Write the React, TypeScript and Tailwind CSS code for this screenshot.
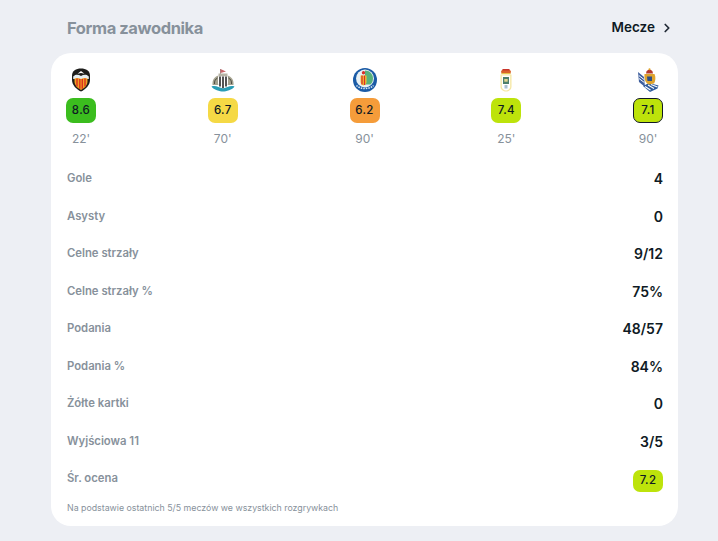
import React from 'react';
import { ChevronRight } from 'lucide-react';

function Valencia() {
  return (
    <svg width="24" height="24" viewBox="0 0 24 24">
      <path d="M3 7.500C3 3 7 0.500 12 0.500S21 3 21 7.500V12C21 17 16.500 21.500 12 23.500C7.500 21.500 3 17 3 12Z" fill="#1d1d1b" />
      <path d="M4.200 8.500C7 6 9.500 6.800 12 8C14.500 6.800 17 6 19.800 8.500V11H4.200Z" fill="#e4edf0" />
      <path d="M5.500 10.500C8 9.500 10 10 12 11C14 10 16 9.500 18.500 10.500V13.500C18.500 17.500 15 20.500 12 22C9 20.500 5.500 17.500 5.500 13.500Z" fill="#f2a024" />
      <path d="M8 10.500V18.500M10.800 11V20.800M13.300 11V20.800M16 10.500V18.500" stroke="#d9301f" strokeWidth="1.400" />
      <path d="M12 3L8.500 5.800L12 5L15.500 5.800Z" fill="#ffffff" />
    </svg>
  );
}

function Newcastle() {
  return (
    <svg width="24" height="24" viewBox="0 0 24 24">
      <path d="M9.500 1V7" stroke="#777" strokeWidth="0.800" />
      <path d="M9.500 1L15 3.500L9.500 5Z" fill="#c9656a" />
      <path d="M1.500 17C1 12 3.500 8.500 7.500 7.500L8 17Z" fill="#a5a28f" />
      <path d="M22.500 17C23 12 20.500 8.500 16.500 7.500L16 17Z" fill="#a5a28f" />
      <path d="M3.500 16C3.200 13 4.500 11 6.500 10" stroke="#44443c" strokeWidth="0.900" fill="none" />
      <path d="M20.500 16C20.800 13 19.500 11 17.500 10" stroke="#44443c" strokeWidth="0.900" fill="none" />
      <rect x="7.500" y="5.500" width="9" height="3" fill="#b7b4a6" />
      <path d="M7 8.500H17V15C17 18 14.500 19.500 12 20.500C9.500 19.500 7 18 7 15Z" fill="#ffffff" />
      <path d="M9 8.500V18.500M12 8.500V20.500M15 8.500V18.500" stroke="#1b1b1b" strokeWidth="1.500" />
      <path d="M0.500 18.500C5 17 8 20 12 20.500C16 20 19 17 23.500 18.500C21.500 22 15 23.500 12 23.500C9 23.500 2.500 22 0.500 18.500Z" fill="#2a9db5" />
    </svg>
  );
}

function Getafe() {
  return (
    <svg width="24" height="24" viewBox="0 0 24 24">
      <circle cx="12" cy="12" r="12" fill="#1b5ba6" />
      <circle cx="12" cy="10.500" r="9" fill="#e9f1f4" />
      <path d="M12 2.500C16.500 2.500 20 6 20 10.500C20 13 19 15 17.500 16.500H12Z" fill="#58b27c" />
      <path d="M7.500 7.500H13.500V14C13.500 16 12 17 10.500 17.500C9 17 7.500 16 7.500 14Z" fill="#f4c430" />
      <path d="M9 7.500V16.500M11.500 7.500V17" stroke="#d8312a" strokeWidth="1.300" />
      <circle cx="10.500" cy="4.800" r="1.700" fill="#d8312a" />
      <path d="M3.500 17.500C7 21.500 17 21.500 20.500 17.500" stroke="#d7e6f2" strokeWidth="1.500" fill="none" strokeDasharray="1.500 1" />
    </svg>
  );
}

function Oviedo() {
  return (
    <svg width="24" height="24" viewBox="0 0 24 24">
      <path d="M7 3.500C7.500 0.500 16.500 0.500 17 3.500L16.500 5.500H7.500Z" fill="#d9622b" />
      <rect x="8.500" y="1" width="7" height="1.500" fill="#c9352b" />
      <rect x="7.500" y="5" width="9" height="1.200" fill="#e6c34a" />
      <path d="M6.500 6.500H17.500V19C17.500 21.500 14.500 23.500 12 23.500C9.500 23.500 6.500 21.500 6.500 19Z" fill="#f6e7a1" />
      <path d="M7.800 7.500H16.200V18.800C16.200 20.800 14 22.500 12 22.500C10 22.500 7.800 20.800 7.800 18.800Z" fill="#ffffff" />
      <rect x="9" y="9" width="6" height="7" fill="#4d7f6b" />
      <rect x="10.300" y="11" width="3.400" height="2.700" fill="#e1d690" />
      <rect x="10.500" y="17" width="3" height="3.500" fill="#a9c0cf" />
    </svg>
  );
}

function RealSociedad() {
  return (
    <svg width="24" height="24" viewBox="0 0 24 24">
      <path d="M2 4L8 9L9 19L3 14Z" fill="#3e5f9e" />
      <path d="M2.800 7.500L8 11.500M3 10.500L8.300 14.500" stroke="#ffffff" strokeWidth="1" />
      <path d="M7 18L13 15L22.500 17.500L21.500 20.500L14 24Z" fill="#2f5b9c" />
      <path d="M9 18.500L14.500 22M12 17L18 20.500M15 16.500L21.500 19" stroke="#ffffff" strokeWidth="1.100" />
      <path d="M10.500 3.500C11.500 1 15.500 1 16.500 3.500L17 5.500H10Z" fill="#b5392b" />
      <circle cx="13.500" cy="1.200" r="1" fill="#e0a526" />
      <path d="M8.500 6H18.500C20 9 19.500 13 18 15.500L13 16.500C10 15.500 8 12 8.500 6Z" fill="#dfa32d" />
      <path d="M11 8.500L16 8.500L16 13L11.500 13Z" fill="#2e4e85" />
    </svg>
  );
}

const matches = [
  { logo: <Valencia />, rating: '8.6', color: 'bg-[#3bbd1e]', minutes: "22'", border: '' },
  { logo: <Newcastle />, rating: '6.7', color: 'bg-[#f5d945]', minutes: "70'", border: '' },
  { logo: <Getafe />, rating: '6.2', color: 'bg-[#f59c3a]', minutes: "90'", border: '' },
  { logo: <Oviedo />, rating: '7.4', color: 'bg-[#bde30b]', minutes: "25'", border: '' },
  { logo: <RealSociedad />, rating: '7.1', color: 'bg-[#bde30b]', minutes: "90'", border: 'border border-[#111827]' },
];

const stats = [
  { label: 'Gole', value: '4' },
  { label: 'Asysty', value: '0' },
  { label: 'Celne strzały', value: '9/12' },
  { label: 'Celne strzały %', value: '75%' },
  { label: 'Podania', value: '48/57' },
  { label: 'Podania %', value: '84%' },
  { label: 'Żółte kartki', value: '0' },
  { label: 'Wyjściowa 11', value: '3/5' },
];

export default function App() {
  return (
    <div className="h-[541px] w-[718px] overflow-hidden bg-[#edeff4] pl-[51px] pr-[40px] font-['Inter',sans-serif] text-[#0f1a24]">
      <div className="flex h-[53px] items-center justify-between pl-4 pr-[4px] pt-[2px]">
        <h2 className="mt-[1px] text-[16.500px] font-bold tracking-[-0.4px] text-[#87919b]">Forma zawodnika</h2>
        <div className="flex items-center gap-[5px]">
          <span className="text-[13.500px] font-semibold leading-none">Mecze</span>
          <ChevronRight size={14} strokeWidth={3} className="text-[#222b36]" />
        </div>
      </div>

      <div className="rounded-[20px] bg-white pb-[11px] pl-[15px] pr-[15px] pt-[15px]">
        <div className="flex justify-between">
          {matches.map((m, i) => (
            <div key={i} className="flex w-[30px] flex-col items-center">
              <div className="flex h-[24px] w-[24px] items-center justify-center">{m.logo}</div>
              <div className={`mt-[6px] flex h-[25px] w-[30px] items-center justify-center rounded-[7px] text-[11.500px] font-medium tracking-[0.3px] ${m.color} ${m.border}`}>
                {m.rating}
              </div>
              <div className="mt-[8px] text-[12px] leading-[16px] text-[#87919b]">{m.minutes}</div>
            </div>
          ))}
        </div>

        <div className="mt-[13px]">
          {stats.map((s) => (
            <div key={s.label} className="flex h-[37.500px] items-center justify-between">
              <span className="ml-[1px] text-[11.300px] font-semibold text-[#87919b]">{s.label}</span>
              <span className="text-[14px] font-semibold">{s.value}</span>
            </div>
          ))}
          <div className="flex h-[37.500px] items-center justify-between">
            <span className="ml-[1px] text-[11.300px] font-semibold text-[#87919b]">Śr. ocena</span>
            <div className="mt-[4px] flex h-[22px] w-[30px] items-center justify-center rounded-[7px] bg-[#bde30b] text-[11.500px] font-medium tracking-[0.3px]">
              7.2
            </div>
          </div>
        </div>

        <p className="ml-[1px] mt-[3px] text-[8.800px] leading-[14px] text-[#87919b]">
          Na podstawie ostatnich 5/5 meczów we wszystkich rozgrywkach
        </p>
      </div>
    </div>
  );
}
